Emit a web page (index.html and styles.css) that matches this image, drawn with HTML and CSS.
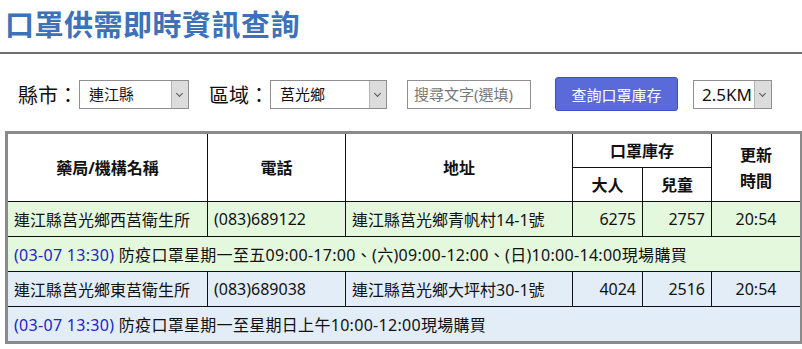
FILE: index.html
```html
<!DOCTYPE html>
<html lang="zh-Hant">
<head>
  <meta charset="UTF-8" />
  <meta name="viewport" content="width=device-width, initial-scale=1.0"/>
  <title>口罩供需即時資訊查詢</title>
  <link rel="stylesheet" href="styles.css">
</head>
<body>
  <!-- Header -->
  <div class="header">
    <h1>口罩供需即時資訊查詢</h1>
  </div>

  <!-- Filters -->
  <div class="filters">
    <label class="field-label">縣市：</label>
    <span class="pick pick-city">
      <select>
        <option>連江縣</option>
      </select>
    </span>
    <label class="field-label gap-left">區域：</label>
    <span class="pick pick-area">
      <select>
        <option>莒光鄉</option>
      </select>
    </span>
    <input type="text" class="keyword" placeholder="搜尋文字(選填)" />
    <button class="search-btn">查詢口罩庫存</button>
    <span class="pick pick-range">
      <select>
        <option>2.5KM</option>
      </select>
    </span>
  </div>

  <!-- Results -->
  <table class="stock-table">
    <colgroup>
      <col class="c-name">
      <col class="c-phone">
      <col class="c-addr">
      <col class="c-adult">
      <col class="c-child">
      <col class="c-time">
    </colgroup>
    <thead>
      <tr>
        <th rowspan="2">藥局/機構名稱</th>
        <th rowspan="2">電話</th>
        <th rowspan="2">地址</th>
        <th colspan="2">口罩庫存</th>
        <th rowspan="2">更新<br>時間</th>
      </tr>
      <tr>
        <th>大人</th>
        <th>兒童</th>
      </tr>
    </thead>
    <tbody>
      <tr class="row-green">
        <td>連江縣莒光鄉西莒衛生所</td>
        <td>(083)689122</td>
        <td>連江縣莒光鄉青帆村14-1號</td>
        <td class="num">6275</td>
        <td class="num">2757</td>
        <td class="center">20:54</td>
      </tr>
      <tr class="row-green">
        <td colspan="6" class="note"><span class="stamp">(03-07 13:30)</span> 防疫口罩星期一至五09:00-17:00、(六)09:00-12:00、(日)10:00-14:00現場購買</td>
      </tr>
      <tr class="row-blue">
        <td>連江縣莒光鄉東莒衛生所</td>
        <td>(083)689038</td>
        <td>連江縣莒光鄉大坪村30-1號</td>
        <td class="num">4024</td>
        <td class="num">2516</td>
        <td class="center">20:54</td>
      </tr>
      <tr class="row-blue">
        <td colspan="6" class="note"><span class="stamp">(03-07 13:30)</span> 防疫口罩星期一至星期日上午10:00-12:00現場購買</td>
      </tr>
    </tbody>
  </table>
</body>
</html>
```

FILE: styles.css
```css
body {
  margin: 0;
  font-family: "Noto Sans", "Noto Sans CJK TC", sans-serif;
  background-color: #ffffff;
  color: #111;
}
.header {
  border-bottom: 2px solid #6e6e6e;
}
h1 {
  margin: 0;
  padding: 5px 5px 7px;
  font-size: 29px;
  line-height: 40px;
  color: #3d72b8;
  font-weight: bold;
  letter-spacing: 0.5px;
}
.filters {
  display: flex;
  align-items: center;
  padding: 23px 18px 20px;
}
.field-label {
  font-size: 20px;
  margin-right: 1px;
}
.gap-left {
  margin-left: 20px;
}
.pick {
  position: relative;
  display: inline-block;
}
.pick select {
  appearance: none;
  -webkit-appearance: none;
  height: 29px;
  border: 1px solid #8f8f8f;
  border-radius: 0;
  background: #fff;
  font-family: "Noto Sans", "Noto Sans CJK TC", sans-serif;
  font-size: 15px;
  color: #111;
  padding: 0 20px 0 9px;
  width: 100%;
}
.pick::after {
  content: "";
  position: absolute;
  top: 1px;
  right: 1px;
  bottom: 1px;
  width: 16px;
  border-left: 1px solid #b5b5b5;
  background: #dcdcdc;
  pointer-events: none;
}
.pick::before {
  content: "";
  position: absolute;
  top: 11px;
  right: 7px;
  width: 4px;
  height: 4px;
  border-right: 1px solid #555;
  border-bottom: 1px solid #555;
  transform: rotate(45deg);
  z-index: 1;
  pointer-events: none;
}
.pick-city { width: 110px; }
.pick-area { width: 117px; }
.pick-range { width: 79px; }
.pick-range select {
  font-size: 17px;
  padding-left: 8px;
}
.keyword {
  margin-left: 20px;
  width: 124px;
  height: 29px;
  box-sizing: border-box;
  border: 1px solid #8f8f8f;
  padding: 0 6px;
  font-family: "Noto Sans", "Noto Sans CJK TC", sans-serif;
  font-size: 15px;
}
.keyword::placeholder {
  color: #777;
}
.search-btn {
  margin-left: 24px;
  margin-right: 15px;
  width: 123px;
  height: 34px;
  border: 1px solid #3f4fc4;
  border-radius: 3px;
  background-color: #5a6ad8;
  color: white;
  font-family: "Noto Sans", "Noto Sans CJK TC", sans-serif;
  font-size: 15px;
  cursor: pointer;
}
.search-btn:hover {
  background-color: #4c5cc8;
}

/* Stock table */
.stock-table {
  margin-left: 5px;
  width: 795px;
  table-layout: fixed;
  border-collapse: collapse;
  border: 3px solid #8a8a8a;
  font-size: 16px;
}
.c-name { width: 201px; }
.c-phone { width: 138px; }
.c-addr { width: 227px; }
.c-adult { width: 70px; }
.c-child { width: 69px; }
.c-time { width: 90px; }
.stock-table th,
.stock-table td {
  border: 1px solid #111;
  padding: 0 6px;
  white-space: nowrap;
}
.stock-table th {
  height: 33px;
  font-weight: bold;
  text-align: center;
  line-height: 26px;
}
.stock-table td {
  height: 34px;
  text-align: left;
}
.stock-table td.num { text-align: right; }
.stock-table td.center { text-align: center; }
.stock-table td.note {
  padding-left: 6px;
  letter-spacing: 0.3px;
}
.stamp {
  color: #2424c8;
}
.row-green td { background-color: #e4f8de; }
.row-blue td { background-color: #e2edf8; }
```
